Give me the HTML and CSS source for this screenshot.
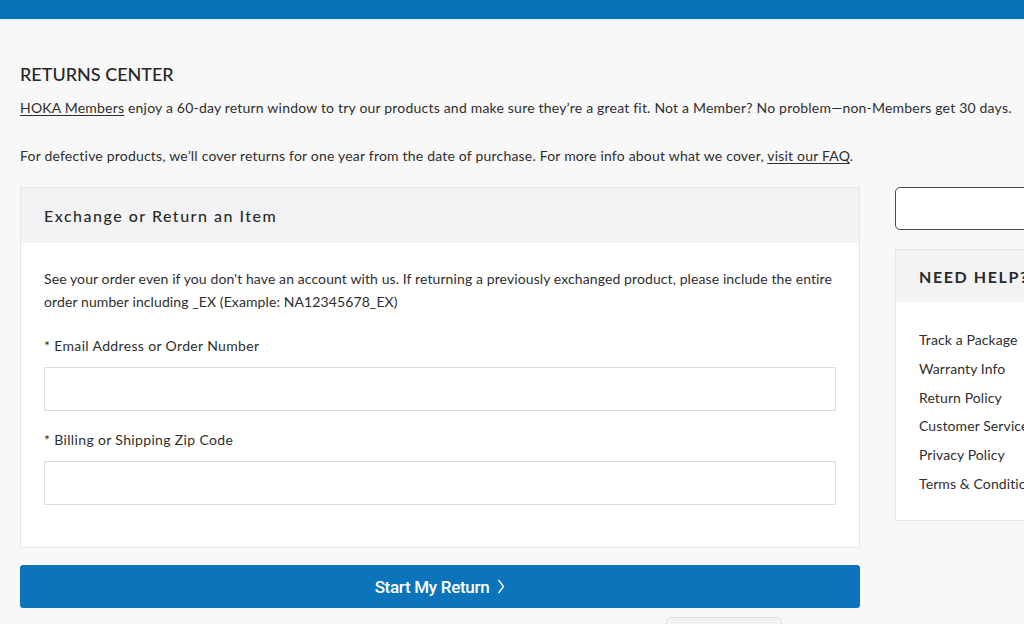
FILE: index.html
```html
<!DOCTYPE html>
<html lang="en">
<head>
<meta charset="utf-8">
<title>Returns Center</title>
<link rel="stylesheet" href="styles.css">
</head>
<body>
<div class="topbar"></div>
<main class="page">
  <h1 class="title">RETURNS CENTER</h1>
  <p class="intro"><a href="#">HOKA Members</a> enjoy a 60-day return window to try our products and make sure they’re a great fit. Not a Member? No problem—non-Members get 30 days.</p>
  <p class="intro">For defective products, we’ll cover returns for one year from the date of purchase. For more info about what we cover, <a href="#">visit our FAQ</a>.</p>
  <div class="layout">
    <div class="main-col">
      <section class="card">
        <header class="card-head">Exchange or Return an Item</header>
        <div class="card-body">
          <p class="note">See your order even if you don't have an account with us. If returning a previously exchanged product, please include the entire order number including _EX (Example: NA12345678_EX)</p>
          <label class="label">* Email Address or Order Number</label>
          <div class="input"></div>
          <label class="label second">* Billing or Shipping Zip Code</label>
          <div class="input"></div>
        </div>
      </section>
      <button class="submit">Start My Return <svg class="chev" width="8" height="15" viewBox="0 0 8 15"><path d="M1.5 1 L6.5 7.5 L1.5 14" fill="none" stroke="#fff" stroke-width="1.4"/></svg></button>
      <div class="peek"></div>
    </div>
    <aside class="side">
      <div class="side-box"></div>
      <section class="help">
        <header class="help-head">NEED HELP?</header>
        <ul class="help-list">
          <li>Track a Package</li>
          <li>Warranty Info</li>
          <li>Return Policy</li>
          <li>Customer Service</li>
          <li>Privacy Policy</li>
          <li>Terms &amp; Conditions</li>
        </ul>
      </section>
    </aside>
  </div>
</main>
</body>
</html>
```
FILE: styles.css
```css
html, body {
  margin: 0;
  padding: 0;
  background: #f8f8f8;
  overflow: hidden;
  width: 1024px;
  height: 624px;
}
body {
  font-family: Lato, "Liberation Sans", sans-serif;
  color: #2e2e2e;
}
.topbar {
  height: 19px;
  background: #0672b6;
  border-bottom: 2px solid #eef4f8;
}
.page {
  padding: 0 20px;
  width: 1200px;
}
.title {
  margin: 41px 0 0;
  font-size: 18px;
  line-height: 24px;
  font-weight: 500;
  letter-spacing: 0;
  color: #262626;
}
.intro {
  margin: 10px 0 0;
  font-size: 14px;
  line-height: 24px;
  letter-spacing: 0.2px;
}
.intro + .intro {
  margin-top: 24px;
}
.intro a {
  color: inherit;
  text-decoration: underline;
  text-underline-offset: 2px;
}
.layout {
  display: flex;
  gap: 35px;
  margin-top: 19px;
  align-items: flex-start;
}
.main-col {
  width: 840px;
  flex: none;
}
.card {
  border: 1px solid #e6e6e6;
  background: #fff;
}
.card-head {
  height: 55px;
  background: #f3f3f5;
  display: flex;
  align-items: center;
  padding: 0 23px;
  font-size: 16px;
  font-weight: 500;
  letter-spacing: 1.5px;
  color: #2a2a2a;
}
.card-body {
  padding: 24px 23px 42px;
}
.note {
  margin: 0;
  font-size: 14px;
  line-height: 23px;
  letter-spacing: 0.1px;
}
.label {
  display: block;
  margin-top: 23px;
  font-size: 14px;
  line-height: 20px;
  letter-spacing: 0.35px;
}
.label.second {
  margin-top: 19px;
}
.input {
  margin-top: 11px;
  height: 42px;
  border: 1px solid #dcdcdc;
  background: #fff;
}
.submit {
  display: flex;
  width: 100%;
  height: 43px;
  margin-top: 17px;
  align-items: center;
  justify-content: center;
  gap: 8px;
  border: none;
  border-radius: 3px;
  background: #0b74ba;
  color: #fff;
  font-family: Roboto, "Liberation Sans", sans-serif;
  font-size: 17px;
  font-weight: 500;
  letter-spacing: -0.3px;
  padding: 0;
}
.chev {
  display: block;
}
.peek {
  width: 114px;
  height: 20px;
  margin: 9px 0 0 646px;
  border: 1px solid #dedede;
  border-radius: 5px;
  background: #f3f3f3;
}
.side {
  width: 220px;
  flex: none;
}
.side-box {
  height: 41px;
  border: 1.5px solid #4a4a4a;
  border-radius: 5px;
  background: #fff;
}
.help {
  margin-top: 19px;
  border: 1px solid #e6e6e6;
  background: #fff;
}
.help-head {
  height: 52px;
  background: #f3f3f5;
  display: flex;
  align-items: center;
  padding: 0 23px;
  font-size: 16px;
  font-weight: 700;
  letter-spacing: 1.6px;
  color: #2a2a2a;
}
.help-list {
  list-style: none;
  margin: 0;
  padding: 24px 23px 21px;
}
.help-list li {
  font-size: 14px;
  line-height: 28.8px;
  letter-spacing: 0.1px;
}
```
